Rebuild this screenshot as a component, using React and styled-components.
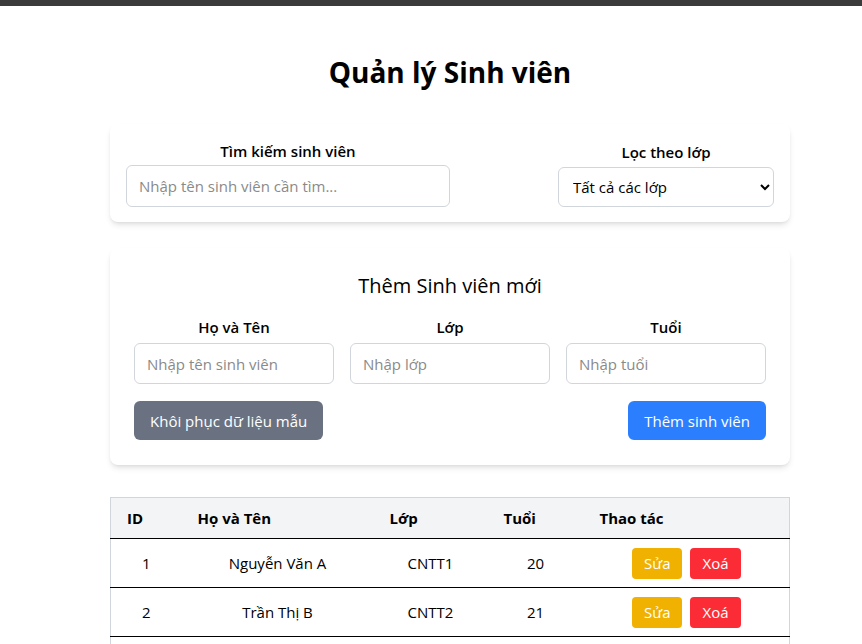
import React, { useState } from "react";
import styled, { createGlobalStyle } from "styled-components";

const GlobalStyle = createGlobalStyle`
  * { box-sizing: border-box; }
  body {
    margin: 0;
    background: #ffffff;
    font-family: "Open Sans", "Noto Sans", sans-serif;
    color: #000;
  }
`;

const TopBar = styled.div`
  height: 6px;
  background: #3b3b3b;
`;

const Page = styled.div`
  width: 680px;
  margin-left: 110px;
  padding-top: 48px;
`;

const Title = styled.h1`
  margin: 0 0 34px;
  text-align: center;
  font-size: 28px;
  line-height: 36px;
  font-weight: 700;
`;

const Card = styled.div`
  background: #fff;
  border-radius: 8px;
  box-shadow: 0 4px 6px -1px rgba(0, 0, 0, 0.1), 0 2px 4px -2px rgba(0, 0, 0, 0.1);
  padding: ${(p) => p.$pad};
  margin-bottom: ${(p) => p.$mb};
`;

const FilterRow = styled.div`
  display: flex;
  justify-content: space-between;
  align-items: flex-end;
`;

const Field = styled.div`
  display: flex;
  flex-direction: column;
  min-width: 0;
  width: ${(p) => p.$w || "auto"};
`;

const Label = styled.label`
  text-align: center;
  font-size: 15px;
  line-height: 22px;
  font-weight: 600;
  margin-bottom: ${(p) => p.$mb || "5px"};
`;

const Input = styled.input`
  width: 100%;
  height: ${(p) => p.$h || "41px"};
  border: 1px solid #d1d5dc;
  border-radius: 6px;
  padding: 0 12px;
  font-family: inherit;
  font-size: 15px;
  outline: none;
  &::placeholder { color: #8a8a8a; }
`;

const Select = styled.select`
  height: 40px;
  border: 1px solid #d1d5dc;
  border-radius: 6px;
  padding: 0 10px;
  font-family: inherit;
  font-size: 15px;
  background: #fff;
  color: #000;
`;

const FormTitle = styled.h2`
  margin: 0 0 16px;
  text-align: center;
  font-size: 20px;
  line-height: 28px;
  font-weight: 500;
`;

const FormGrid = styled.div`
  display: grid;
  grid-template-columns: repeat(3, minmax(0, 1fr));
  gap: 16px;
`;

const Actions = styled.div`
  display: flex;
  justify-content: space-between;
  margin-top: 17px;
`;

const Button = styled.button`
  height: ${(p) => p.$h || "39px"};
  padding: 0 ${(p) => p.$px || "16px"};
  border: none;
  border-radius: ${(p) => p.$r || "6px"};
  background: ${(p) => p.$bg};
  color: #fff;
  font-family: inherit;
  font-size: 15px;
  cursor: pointer;
`;

const Table = styled.table`
  width: 100%;
  border-collapse: collapse;
  border: 1px solid #d1d5dc;
  font-size: 15px;
`;

const Th = styled.th`
  text-align: left;
  font-weight: 700;
  padding: 0 16px;
  height: 41px;
  background: #f3f4f6;
  width: ${(p) => p.$w};
  border-bottom: 1px solid #000;
`;

const Td = styled.td`
  text-align: center;
  height: 49px;
  border-bottom: 1px solid #000;
`;

const BtnGroup = styled.div`
  display: flex;
  justify-content: center;
  gap: 8px;
`;

const students = [
  { id: 1, name: "Nguyễn Văn A", cls: "CNTT1", age: 20 },
  { id: 2, name: "Trần Thị B", cls: "CNTT2", age: 21 },
  { id: 3, name: "Lê Văn C", cls: "CNTT1", age: 22 },
];

export default function App() {
  const [list] = useState(students);
  return (
    <>
      <GlobalStyle />
      <TopBar />
      <Page>
        <Title>Quản lý Sinh viên</Title>

        <Card $pad="16px 16px 15px" $mb="26px">
          <FilterRow>
            <Field $w="324px">
              <Label $mb="3px">Tìm kiếm sinh viên</Label>
              <Input $h="42px" placeholder="Nhập tên sinh viên cần tìm..." />
            </Field>
            <Field $w="216px">
              <Label $mb="4px">Lọc theo lớp</Label>
              <Select defaultValue="all">
                <option value="all">Tất cả các lớp</option>
                <option value="CNTT1">CNTT1</option>
                <option value="CNTT2">CNTT2</option>
              </Select>
            </Field>
          </FilterRow>
        </Card>

        <Card $pad="24px 24px 25px" $mb="32px">
          <FormTitle>Thêm Sinh viên mới</FormTitle>
          <FormGrid>
            <Field>
              <Label>Họ và Tên</Label>
              <Input placeholder="Nhập tên sinh viên" />
            </Field>
            <Field>
              <Label>Lớp</Label>
              <Input placeholder="Nhập lớp" />
            </Field>
            <Field>
              <Label>Tuổi</Label>
              <Input placeholder="Nhập tuổi" />
            </Field>
          </FormGrid>
          <Actions>
            <Button $bg="#6a7282">Khôi phục dữ liệu mẫu</Button>
            <Button $bg="#2b7fff">Thêm sinh viên</Button>
          </Actions>
        </Card>

        <Table>
          <thead>
            <tr>
              <Th $w="71px">ID</Th>
              <Th $w="192px">Họ và Tên</Th>
              <Th $w="114px">Lớp</Th>
              <Th $w="96px">Tuổi</Th>
              <Th>Thao tác</Th>
            </tr>
          </thead>
          <tbody>
            {list.map((s) => (
              <tr key={s.id}>
                <Td>{s.id}</Td>
                <Td>{s.name}</Td>
                <Td>{s.cls}</Td>
                <Td>{s.age}</Td>
                <Td>
                  <BtnGroup>
                    <Button $bg="#f0b100" $h="31px" $px="12px" $r="4px">Sửa</Button>
                    <Button $bg="#fb2c36" $h="31px" $px="12px" $r="4px">Xoá</Button>
                  </BtnGroup>
                </Td>
              </tr>
            ))}
          </tbody>
        </Table>
      </Page>
    </>
  );
}
